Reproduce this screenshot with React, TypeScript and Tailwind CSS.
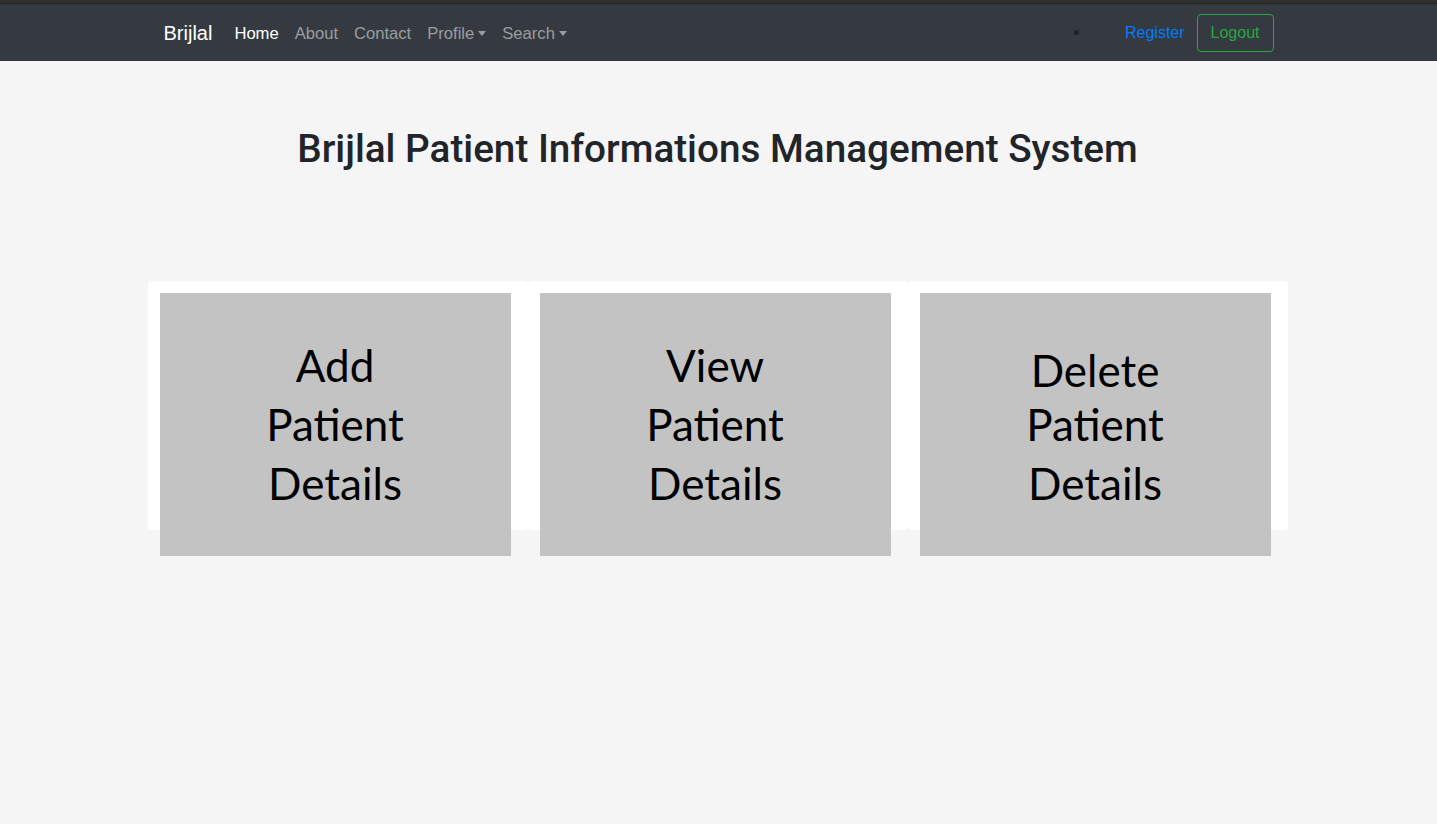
import React from "react";

const navFont = { fontFamily: '"Liberation Sans", Arial, sans-serif' };

function Caret() {
  return (
    <span className="ml-[4px] inline-block h-0 w-0 border-x-[4px] border-t-[5px] border-x-transparent border-t-current align-[3px]" />
  );
}

const tiles = [
  { lines: ["Add", "Patient", "Details"], shift: "" },
  { lines: ["View", "Patient", "Details"], shift: "" },
  { lines: ["Delete", "Patient", "Details"], shift: "translate-y-[5px]" },
];

export default function App() {
  return (
    <div className="min-h-[824px] bg-[#f5f5f5] text-[#212529]" style={navFont}>
      <div className="h-[4px] border-b border-[#222] bg-[#2f2f2f]" />
      <nav className="h-[57px] bg-[#343a40]">
        <div className="mx-auto flex h-full w-[1140px] items-center px-[15px]">
          <a className="mr-[14px] text-[20px] text-white">Brijlal</a>
          <ul className="mt-[3px] flex items-center text-[16.6px]">
            <li className="px-[8px] text-white">Home</li>
            <li className="px-[8px] text-white/50">About</li>
            <li className="px-[8px] text-white/50">Contact</li>
            <li className="px-[8px] text-white/50">
              Profile
              <Caret />
            </li>
            <li className="px-[8px] text-white/50">
              Search
              <Caret />
            </li>
          </ul>
          <div className="ml-auto flex items-center">
            <span className="mr-[46px] h-[5px] w-[5px] rounded-full bg-[#1e2226]" />
            <a className="mt-[1px] mr-[12px] text-[16px] text-[#007bff]">Register</a>
            <button
              type="button"
              className="h-[38px] rounded-[4px] border border-[#28a745] px-[13px] pt-[1px] text-[16px] text-[#28a745]"
            >
              Logout
            </button>
          </div>
        </div>
      </nav>

      <main className="mx-auto w-[1140px] -translate-x-[1px]">
        <h1
          className="pt-[64px] text-center text-[38.7px] leading-[48px] font-medium"
          style={{ fontFamily: 'Roboto, "Liberation Sans", sans-serif' }}
        >
          Brijlal Patient Informations Management System
        </h1>

        <div className="mt-[108px] grid grid-cols-3">
          {tiles.map((tile) => (
            <div key={tile.lines[0]} className="h-[249px] rounded-[4px] bg-white p-[12px]">
              <div
                className="flex h-[263px] w-[351px] flex-col items-center justify-center bg-[#c3c3c3] text-[44px] leading-[59px] text-black"
                style={{ fontFamily: 'Lato, "Open Sans", sans-serif' }}
              >
                {tile.lines.map((line, i) => (
                  <span key={line} className={i === 0 ? tile.shift : ""}>
                    {line}
                  </span>
                ))}
              </div>
            </div>
          ))}
        </div>
      </main>
    </div>
  );
}
